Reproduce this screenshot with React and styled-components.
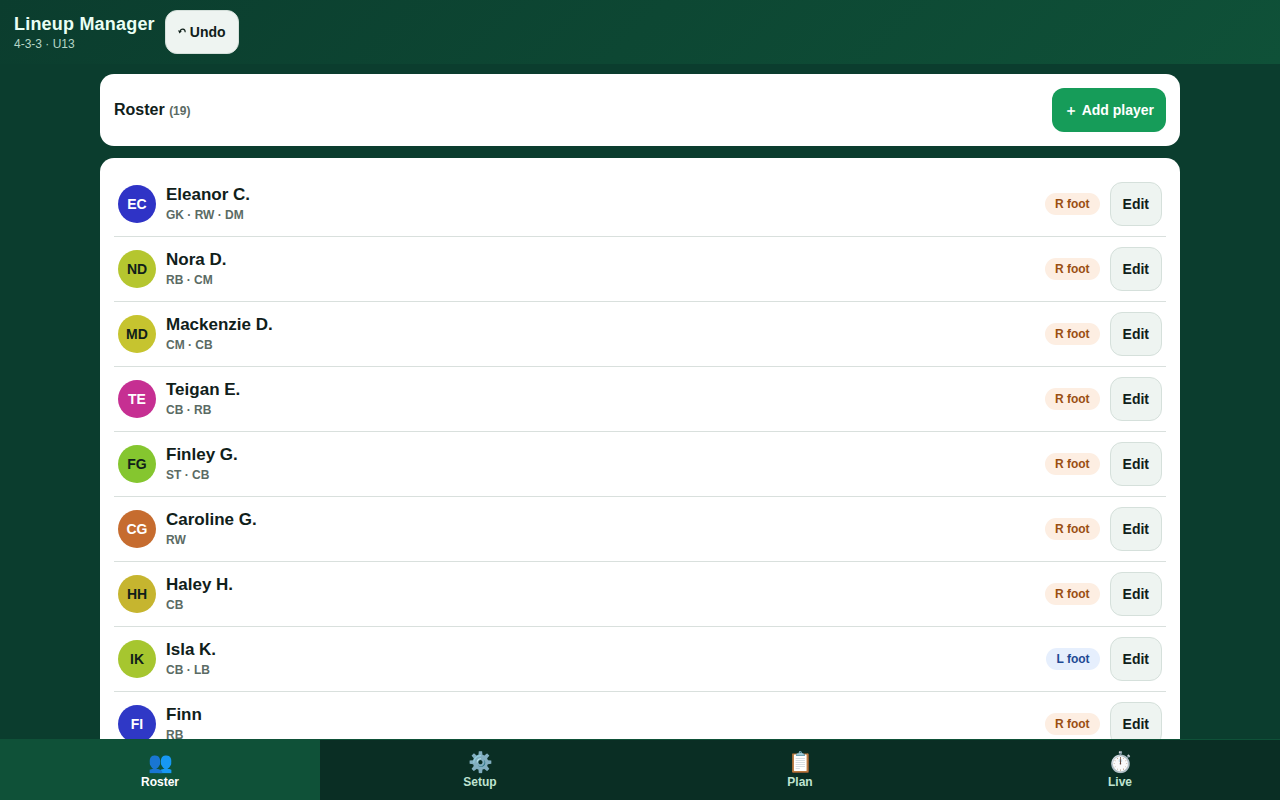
import React from 'react';
import styled, { createGlobalStyle } from 'styled-components';

const GlobalStyle = createGlobalStyle`
  * {
    box-sizing: border-box;
  }
  body {
    margin: 0;
    background: #0b3d2e;
    color: #10201a;
    font-family: 'Liberation Sans', Arial, sans-serif;
    font-size: 16px;
    overflow: hidden;
  }
  button {
    font-family: inherit;
    cursor: pointer;
  }
`;

const Shell = styled.div`
  display: flex;
  flex-direction: column;
  height: 100vh;
`;

const Header = styled.header`
  display: flex;
  align-items: center;
  gap: 10px;
  flex-shrink: 0;
  padding: 10px 14px;
  background: linear-gradient(135deg, #0b3d2e, #0f5138);
`;

const AppTitle = styled.h1`
  margin: 0;
  color: #eafff4;
  font-size: 18px;
  line-height: 20px;
  letter-spacing: 0.2px;
`;

const AppSubtitle = styled.div`
  margin-top: 3px;
  color: #b5d6c7;
  font-size: 12px;
  line-height: 14px;
`;

const Button = styled.button`
  display: flex;
  align-items: center;
  gap: 4px;
  min-height: 44px;
  padding: 0 12px;
  border: ${({ $primary }) => ($primary ? '0' : '1px solid #d5e0db')};
  border-radius: 12px;
  background: ${({ $primary }) => ($primary ? '#169c59' : '#eef4f1')};
  color: ${({ $primary }) => ($primary ? '#fff' : '#10201a')};
  font-size: 14px;
  font-weight: 700;
  line-height: 16px;
`;

const Main = styled.main`
  flex: 1;
  min-height: 0;
  overflow: hidden;
  padding: 10px;
`;

const Content = styled.div`
  display: flex;
  flex-direction: column;
  gap: 12px;
  max-width: 1080px;
  margin: 0 auto;
`;

const Card = styled.section`
  padding: 14px;
  border-radius: 14px;
  background: #fff;
`;

const CardHeader = styled.div`
  display: flex;
  align-items: center;
  justify-content: space-between;
`;

const CardTitle = styled.h2`
  margin: 0;
  font-size: 16px;
`;

const Count = styled.span`
  color: #5b6b64;
  font-size: 12px;
`;

const PlayerList = styled.ul`
  margin: 0;
  padding: 0;
  list-style: none;
`;

const PlayerRow = styled.li`
  display: flex;
  align-items: center;
  gap: 10px;
  padding: 10px 4px;
  border-bottom: 1px solid #d9e0dd;
`;

const Avatar = styled.div`
  display: flex;
  align-items: center;
  justify-content: center;
  flex-shrink: 0;
  width: 38px;
  height: 38px;
  border-radius: 50%;
  background: ${({ $bg }) => $bg};
  color: ${({ $dark }) => ($dark ? '#10201a' : '#fff')};
  font-size: 14px;
  font-weight: 700;
`;

const PlayerInfo = styled.div`
  flex: 1;
  min-width: 0;
`;

const PlayerName = styled.div`
  font-size: 17px;
  font-weight: 700;
  line-height: 20px;
`;

const Positions = styled.div`
  margin-top: 3px;
  padding-bottom: 1px;
  color: #5b6b64;
  font-size: 12px;
  font-weight: 700;
  line-height: 14px;
`;

const FootBadge = styled.span`
  padding: 4px 10px;
  border-radius: 999px;
  background: ${({ $left }) => ($left ? '#e6effd' : '#fdeee2')};
  color: ${({ $left }) => ($left ? '#1e4a94' : '#9a4f12')};
  font-size: 12px;
  font-weight: 700;
  line-height: 14px;
`;

const TabBar = styled.nav`
  display: grid;
  grid-template-columns: repeat(4, 1fr);
  flex-shrink: 0;
  border-top: 1px solid #0f5138;
  background: #0a2e24;
`;

const Tab = styled.button`
  display: flex;
  flex-direction: column;
  align-items: center;
  justify-content: center;
  gap: 2px;
  height: 60px;
  padding: 0;
  border: 0;
  background: ${({ $active }) => ($active ? '#0f5138' : 'transparent')};
  color: ${({ $active }) => ($active ? '#fff' : '#bfe3d1')};
  font-size: 12px;
  font-weight: 700;
  line-height: 14px;
`;

const TabIcon = styled.span`
  font-size: 20px;
  line-height: 22px;
`;

const players = [
  { name: 'Eleanor C.', initials: 'EC', positions: 'GK · RW · DM', foot: 'R', color: '#2f33c6' },
  { name: 'Nora D.', initials: 'ND', positions: 'RB · CM', foot: 'R', color: '#b5c62f', dark: true },
  { name: 'Mackenzie D.', initials: 'MD', positions: 'CM · CB', foot: 'R', color: '#c6c42f', dark: true },
  { name: 'Teigan E.', initials: 'TE', positions: 'CB · RB', foot: 'R', color: '#c62f92' },
  { name: 'Finley G.', initials: 'FG', positions: 'ST · CB', foot: 'R', color: '#85c62f', dark: true },
  { name: 'Caroline G.', initials: 'CG', positions: 'RW', foot: 'R', color: '#c66c2f' },
  { name: 'Haley H.', initials: 'HH', positions: 'CB', foot: 'R', color: '#c6b52f', dark: true },
  { name: 'Isla K.', initials: 'IK', positions: 'CB · LB', foot: 'L', color: '#a6c62f', dark: true },
  { name: 'Finn', initials: 'FI', positions: 'RB', foot: 'R', color: '#2f38c6' }
];

const tabs = [
  { label: 'Roster', icon: '👥' },
  { label: 'Setup', icon: '⚙️' },
  { label: 'Plan', icon: '📋' },
  { label: 'Live', icon: '⏱️' }
];

function UndoIcon() {
  return (
    <svg width="8" height="16" viewBox="0 0 8 16" aria-hidden="true">
      <path
        d="M2 7.2C3 4.4 7.2 4.2 7.2 8.2"
        fill="none"
        stroke="currentColor"
        strokeWidth="1.1"
      />
      <path d="M0 6.2L3.8 7.2L1.5 9.4Z" fill="currentColor" />
    </svg>
  );
}

function Player({ name, initials, positions, foot, color, dark }) {
  return (
    <PlayerRow>
      <Avatar $bg={color} $dark={dark}>
        {initials}
      </Avatar>
      <PlayerInfo>
        <PlayerName>{name}</PlayerName>
        <Positions>{positions}</Positions>
      </PlayerInfo>
      <FootBadge $left={foot === 'L'}>{foot} foot</FootBadge>
      <Button type="button">Edit</Button>
    </PlayerRow>
  );
}

function App() {
  return (
    <Shell>
      <GlobalStyle />
      <Header>
        <div>
          <AppTitle>Lineup Manager</AppTitle>
          <AppSubtitle>4-3-3 · U13</AppSubtitle>
        </div>
        <Button type="button">
          <UndoIcon />
          Undo
        </Button>
      </Header>
      <Main>
        <Content>
          <Card>
            <CardHeader>
              <CardTitle>
                Roster <Count>(19)</Count>
              </CardTitle>
              <Button type="button" $primary>
                ＋ Add player
              </Button>
            </CardHeader>
          </Card>
          <Card>
            <PlayerList>
              {players.map(player => (
                <Player key={player.name} {...player} />
              ))}
            </PlayerList>
          </Card>
        </Content>
      </Main>
      <TabBar>
        {tabs.map(({ label, icon }, index) => (
          <Tab key={label} type="button" $active={index === 0}>
            <TabIcon>{icon}</TabIcon>
            {label}
          </Tab>
        ))}
      </TabBar>
    </Shell>
  );
}

export default App;
